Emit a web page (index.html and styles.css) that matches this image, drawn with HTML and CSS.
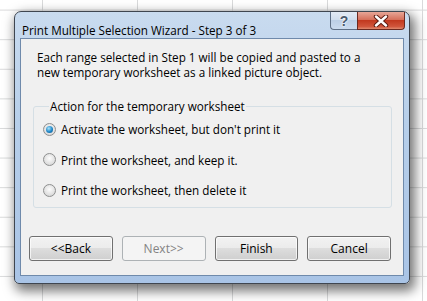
FILE: index.html
```html
<!DOCTYPE html>
<html lang="en">

<head>
    <meta charset="UTF-8">
    <title>Print Multiple Selection Wizard</title>
    <link rel="stylesheet" href="styles.css">
</head>

<body>
    <div class="window">
        <div class="titlebar">
            <span class="title">Print Multiple Selection Wizard - Step 3 of 3</span>
            <div class="caption-btns">
                <span class="cap-help">?</span>
                <span class="cap-close">
                    <svg width="16" height="12" viewBox="0 0 16 12">
                        <path d="M3 1.5 L13 10.5 M13 1.5 L3 10.5" stroke="#5a1a10" stroke-width="4.4" stroke-linecap="round" />
                        <path d="M3 1.5 L13 10.5 M13 1.5 L3 10.5" stroke="#fff" stroke-width="2.4" stroke-linecap="round" />
                    </svg>
                </span>
            </div>
        </div>
        <div class="client">
            <p class="intro">Each range selected in Step 1 will be copied and pasted to a<br>new temporary worksheet as a linked picture object.</p>
            <fieldset class="group">
                <legend>Action for the temporary worksheet</legend>
                <label class="opt"><span class="radio checked"></span>Activate the worksheet, but don't print it</label>
                <label class="opt"><span class="radio"></span>Print the worksheet, and keep it.</label>
                <label class="opt"><span class="radio"></span>Print the worksheet, then delete it</label>
            </fieldset>
            <div class="btn-row">
                <button class="btn">&lt;&lt;Back</button>
                <button class="btn" disabled>Next&gt;&gt;</button>
                <button class="btn">Finish</button>
                <button class="btn">Cancel</button>
            </div>
        </div>
    </div>
</body>

</html>
```

FILE: styles.css
```css
* {
    margin: 0;
    padding: 0;
    box-sizing: border-box;
}

body {
    width: 427px;
    height: 301px;
    overflow: hidden;
    background-color: #fff;
    background-image: linear-gradient(to right, #d9dadb 1px, transparent 1px),
        linear-gradient(#d9dadb 1px, transparent 1px);
    background-size: 95px 29.6px;
    background-position: 42px 9.6px;
    font-family: "Open Sans", "Liberation Sans", sans-serif;
    font-size: 11.7px;
    color: #000;
    padding: 11px 0 0 14px;
}

.window {
    width: 396px;
    height: 273px;
    border: 1px solid #3f4650;
    border-radius: 7px 7px 5px 5px;
    background: linear-gradient(#c9dbef, #b7cfea 40%, #a9c4e6);
    box-shadow: 3px 5px 12px 2px rgba(0, 0, 0, 0.55);
    padding: 0 5px 7px 5px;
    display: flex;
    flex-direction: column;
}

.titlebar {
    height: 26px;
    display: flex;
    justify-content: space-between;
    align-items: flex-start;
}

.title {
    padding: 11px 0 0 2px;
    line-height: 15px;
    color: #000;
}

.caption-btns {
    display: flex;
    margin-right: -1px;
}

.cap-help,
.cap-close {
    height: 18px;
    display: flex;
    align-items: center;
    justify-content: center;
    border: 1px solid #5e6f86;
    border-top: none;
}

.cap-help {
    width: 27px;
    border-radius: 0 0 0 4px;
    border-right: none;
    background: linear-gradient(#e3ebf5, #cfdcec 50%, #bccfe6 50%, #cbdbef);
    font-family: "Liberation Sans", sans-serif;
    font-weight: bold;
    font-size: 14px;
    color: #4a5a6e;
    text-shadow: 0 0 2px #fff, 0 0 2px #fff;
}

.cap-close {
    width: 48px;
    border-color: #6b2a20;
    border-radius: 0 0 4px 0;
    background: linear-gradient(#e7a697, #d6705b 45%, #c2391f 50%, #d0553b 85%, #e08a6f);
}

.client {
    flex: 1;
    background: #f0f0f0;
    border: 1px solid #6f8aab;
    padding: 11px 12px 0 16px;
}

.intro {
    line-height: 15px;
    margin-bottom: 18px;
}

.group {
    border: 1px solid #d5dfe5;
    border-radius: 3px;
    margin: 0 0 0 -4px;
    width: 359px;
    height: 110px;
    padding: 0 0 0 9px;
}

.group legend {
    padding: 0 1px;
    margin-left: 6px;
}

.opt {
    display: flex;
    align-items: center;
    height: 30.5px;
    gap: 5px;
}

.radio {
    width: 13px;
    height: 13px;
    border-radius: 50%;
    border: 1px solid #8e8f8f;
    background: radial-gradient(circle at 50% 40%, #fdfdfd, #dcdcdc 70%, #cfcfcf);
    display: flex;
    align-items: center;
    justify-content: center;
}

.radio.checked::after {
    content: "";
    width: 7px;
    height: 7px;
    border-radius: 50%;
    background: radial-gradient(circle at 40% 35%, #a9e4fb, #1e86c7 55%, #0b4f86);
}

.btn-row {
    display: flex;
    gap: 9px;
    margin: 28px 0 0 -8px;
}

.btn {
    width: 85px;
    height: 25px;
    border: 1px solid #707070;
    border-radius: 3px;
    background: linear-gradient(#f2f2f2, #ebebeb 50%, #dddddd 50%, #cfcfcf);
    box-shadow: inset 0 0 0 1px rgba(255, 255, 255, 0.7);
    font-family: "Open Sans", "Liberation Sans", sans-serif;
    font-size: 12px;
    color: #000;
}

.btn:disabled {
    border-color: #adb2b5;
    background: #f4f4f4;
    box-shadow: none;
    color: #838383;
}
```
